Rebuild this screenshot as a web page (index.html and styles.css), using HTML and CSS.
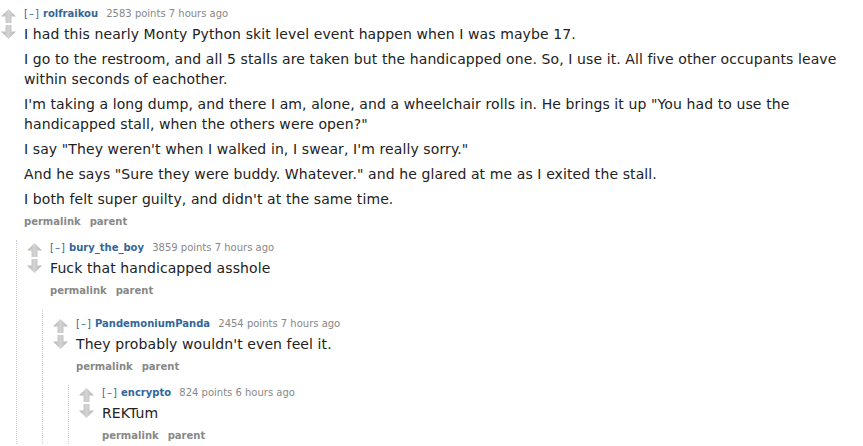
FILE: index.html
```html
<!DOCTYPE html>
<html>
<head>
<meta charset="utf-8">
<link rel="stylesheet" href="styles.css">
</head>
<body>
<svg width="0" height="0" class="defs">
  <defs>
    <linearGradient id="ag" x1="0" y1="0" x2="1" y2="0">
      <stop offset="0" stop-color="#b3b3b3"/>
      <stop offset="0.5" stop-color="#d3d3d3"/>
      <stop offset="1" stop-color="#b3b3b3"/>
    </linearGradient>
    <symbol id="up" viewBox="0 0 15 14"><polygon points="7.5,0 15,7.5 10.5,7.5 10.5,14 4.5,14 4.5,7.5 0,7.5" fill="url(#ag)"/></symbol>
    <symbol id="down" viewBox="0 0 15 14"><polygon points="4.5,0 10.5,0 10.5,6.5 15,6.5 7.5,14 0,6.5 4.5,6.5" fill="url(#ag)"/></symbol>
  </defs>
</svg>

<div class="comment">
  <div class="row">
    <div class="votes">
      <svg class="arrow" width="15" height="14"><use href="#up"/></svg>
      <svg class="arrow" width="15" height="14"><use href="#down"/></svg>
    </div>
    <div class="entry">
      <p class="tagline"><a class="expand">[–]</a> <a class="author">rolfraikou</a> <span class="score">2583 points</span> <span class="time">7 hours ago</span></p>
      <div class="md">
        <p>I had this nearly Monty Python skit level event happen when I was maybe 17.</p>
        <p>I go to the restroom, and all 5 stalls are taken but the handicapped one. So, I use it. All five other occupants leave within seconds of eachother.</p>
        <p>I'm taking a long dump, and there I am, alone, and a wheelchair rolls in. He brings it up "You had to use the handicapped stall, when the others were open?"</p>
        <p>I say "They weren't when I walked in, I swear, I'm really sorry."</p>
        <p>And he says "Sure they were buddy. Whatever." and he glared at me as I exited the stall.</p>
        <p>I both felt super guilty, and didn't at the same time.</p>
      </div>
      <ul class="buttons"><li>permalink</li><li>parent</li></ul>
    </div>
  </div>

  <div class="child">
    <div class="comment">
      <div class="row">
        <div class="votes">
          <svg class="arrow" width="15" height="14"><use href="#up"/></svg>
          <svg class="arrow" width="15" height="14"><use href="#down"/></svg>
        </div>
        <div class="entry">
          <p class="tagline"><a class="expand">[–]</a> <a class="author">bury_the_boy</a> <span class="score">3859 points</span> <span class="time">7 hours ago</span></p>
          <div class="md"><p>Fuck that handicapped asshole</p></div>
          <ul class="buttons"><li>permalink</li><li>parent</li></ul>
        </div>
      </div>

      <div class="child spaced">
        <div class="comment">
          <div class="row">
            <div class="votes">
              <svg class="arrow" width="15" height="14"><use href="#up"/></svg>
              <svg class="arrow" width="15" height="14"><use href="#down"/></svg>
            </div>
            <div class="entry">
              <p class="tagline"><a class="expand">[–]</a> <a class="author">PandemoniumPanda</a> <span class="score">2454 points</span> <span class="time">7 hours ago</span></p>
              <div class="md"><p>They probably wouldn't even feel it.</p></div>
              <ul class="buttons"><li>permalink</li><li>parent</li></ul>
            </div>
          </div>

          <div class="child">
            <div class="comment">
              <div class="row">
                <div class="votes">
                  <svg class="arrow" width="15" height="14"><use href="#up"/></svg>
                  <svg class="arrow" width="15" height="14"><use href="#down"/></svg>
                </div>
                <div class="entry">
                  <p class="tagline"><a class="expand">[–]</a> <a class="author">encrypto</a> <span class="score">824 points</span> <span class="time">6 hours ago</span></p>
                  <div class="md"><p>REKTum</p></div>
                  <ul class="buttons"><li>permalink</li><li>parent</li></ul>
                </div>
              </div>
            </div>
          </div>
        </div>
      </div>
    </div>
  </div>
</div>
</body>
</html>
```

FILE: styles.css
```css
html, body {
  margin: 0;
  padding: 0;
  background: #ffffff;
}
body {
  font-family: "DejaVu Sans", Verdana, sans-serif;
  color: #222222;
  padding: 7px 0 0 1px;
  overflow: hidden;
}
.defs {
  position: absolute;
  width: 0;
  height: 0;
}
.row {
  display: flex;
  align-items: flex-start;
}
.votes {
  width: 15px;
  margin-top: 2px;
  margin-right: 8px;
  display: flex;
  flex-direction: column;
  gap: 2px;
  flex: none;
}
.arrow {
  display: block;
}
.entry {
  flex: 1;
  min-width: 0;
}
.tagline {
  margin: 0;
  font-size: 10px;
  line-height: 14px;
  color: #888888;
  white-space: nowrap;
}
.expand {
  color: #369;
  letter-spacing: 1px;
}
.author {
  color: #369;
  font-weight: bold;
  margin-right: 5px;
}
.md {
  margin-top: 3px;
  font-size: 14px;
  line-height: 20px;
  letter-spacing: 0.1px;
  color: #222222;
}
.md p {
  margin: 0 0 5px 0;
}
.buttons {
  list-style: none;
  margin: 0;
  padding: 0;
  display: flex;
  gap: 9px;
  font-size: 10px;
  line-height: 16px;
  font-weight: bold;
  color: #888888;
}
.child {
  margin-top: 10px;
  margin-left: 15px;
  border-left: 1px dotted #ccccf0;
  padding: 1px 0 0 10px;
}
.child.spaced {
  padding-top: 8px;
}
```
